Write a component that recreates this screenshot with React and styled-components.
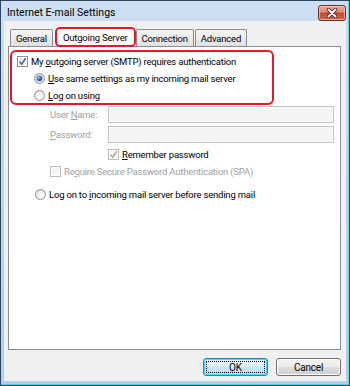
import styled, { createGlobalStyle } from "styled-components"

const GlobalStyle = createGlobalStyle`
  html, body {
    margin: 0;
    padding: 0;
    width: 350px;
    height: 386px;
    overflow: hidden;
    background: #fff;
  }
  * {
    box-sizing: border-box;
  }
`

const Window = styled.div`
  width: 350px;
  height: 386px;
  display: flex;
  flex-direction: column;
  border: 1px solid #2f4463;
  background: linear-gradient(180deg, #cddff2 0%, #bcd3ec 60%, #b4cde9 100%);
  box-shadow: inset -1px -1px 0 #55d3f0;
  padding: 0 3px 4px 3px;
  font-family: Roboto, "Liberation Sans", sans-serif;
  font-size: 9.5px;
  letter-spacing: -0.2px;
  color: #000;
`

const TitleBar = styled.div`
  height: 20px;
  display: flex;
  align-items: center;
  justify-content: space-between;
  padding-left: 3px;
  padding-top: 2px;
  font-size: 10.5px;
  letter-spacing: 0;
  color: #000;
`

const CloseButton = styled.div`
  width: 28px;
  height: 16px;
  margin-top: 2px;
  border: 1px solid #6b2e26;
  border-radius: 3px;
  background: linear-gradient(180deg, #e9a99a 0%, #de8a78 45%, #c94a33 50%, #d0614a 100%);
  box-shadow: inset 0 0 0 1px rgba(255, 220, 210, 0.6);
  display: flex;
  align-items: center;
  justify-content: center;
`

const Client = styled.div`
  flex: 1;
  display: flex;
  flex-direction: column;
  background: #f0f0f0;
  padding: 6px 5px 5px 4px;
`

const TabRow = styled.div`
  display: flex;
  align-items: flex-end;
  height: 20px;
  margin-bottom: -1px;
  padding-left: 2px;
  position: relative;
  z-index: 1;
`

const Tab = styled.div`
  height: ${({ $active }) => ($active ? "20px" : "17px")};
  padding: 0 ${({ $active }) => ($active ? "6px" : "5px")};
  display: flex;
  align-items: center;
  font-size: 9.5px;
  background: ${({ $active }) =>
    $active ? "#fff" : "linear-gradient(180deg, #f3f3f3 0%, #ebebeb 50%, #dfdfdf 100%)"};
  border: ${({ $active }) => ($active ? "2px solid #e3182b" : "1px solid #898c95")};
  border-bottom: ${({ $active }) => ($active ? "2px solid #e3182b" : "none")};
  border-radius: ${({ $active }) => ($active ? "5px" : "2px 2px 0 0")};
  margin-right: ${({ $active }) => ($active ? "0" : "1px")};
  margin-left: ${({ $active }) => ($active ? "1px" : "0")};
  ${({ $active }) => !$active && "margin-bottom: 1px;"}
`

const Panel = styled.div`
  flex: 1;
  background: #fff;
  border: 1px solid #898c95;
  padding: 3px 0 0 1px;
  display: flex;
  flex-direction: column;
`

const Highlight = styled.div`
  width: 264px;
  border: 2px solid #e3182b;
  border-radius: 6px;
  padding: 1px 0 0 5px;
  display: flex;
  flex-direction: column;
  gap: 1px;
`

const Row = styled.div`
  height: 16px;
  display: flex;
  align-items: center;
  gap: 3px;
  margin-left: ${({ $indent }) => $indent || 0}px;
  margin-top: ${({ $top }) => $top || 0}px;
  color: ${({ $disabled }) => ($disabled ? "#a0a0a0" : "#000")};
`

const Key = styled.span`
  text-decoration: underline;
  text-underline-offset: 1px;
`

const CredGrid = styled.div`
  display: grid;
  grid-template-columns: 58px 226px;
  grid-auto-rows: 17px;
  row-gap: 3px;
  margin: 1px 0 0 40px;
  color: #a0a0a0;
  align-items: center;
`

const Field = styled.div`
  height: 100%;
  border: 1px solid #c2c2c2;
  background: #f4f4f4;
  box-shadow: inset 0 0 0 1px #fafafa;
`

const CheckBox = styled.span`
  width: 11px;
  height: 11px;
  flex: none;
  border: 1px solid ${({ $disabled }) => ($disabled ? "#bcbcbc" : "#8e8f8f")};
  background: ${({ $disabled }) =>
    $disabled ? "#f4f4f4" : "linear-gradient(135deg, #dcdcdc 0%, #f6f6f6 80%, #fff 100%)"};
  box-shadow: inset 0 0 0 1px #fff;
  display: flex;
  align-items: center;
  justify-content: center;
`

const RadioCircle = styled.span`
  width: 11px;
  height: 11px;
  flex: none;
  border-radius: 50%;
  border: 1px solid #8e8f8f;
  background: radial-gradient(circle at 60% 65%, #fff 0%, #eaeaea 60%, #d0d0d0 100%);
  display: flex;
  align-items: center;
  justify-content: center;
`

const RadioDot = styled.span`
  width: 5px;
  height: 5px;
  border-radius: 50%;
  background: radial-gradient(circle at 35% 35%, #8bc6f0 0%, #1f5fa8 50%, #0d2c5c 100%);
  box-shadow: 0 0 0 1px rgba(40, 80, 140, 0.35);
`

const ButtonRow = styled.div`
  display: flex;
  justify-content: flex-end;
  gap: 8px;
  margin-top: 8px;
`

const Button = styled.div`
  width: 65px;
  height: 18px;
  border-radius: 3px;
  display: flex;
  align-items: center;
  justify-content: center;
  font-size: 10px;
  border: 1px solid ${({ $default }) => ($default ? "#3c7fb1" : "#707070")};
  background: ${({ $default }) =>
    $default
      ? "linear-gradient(180deg, #eaf6fd 0%, #dff2fc 50%, #c6e8fb 50%, #b8e0f7 100%)"
      : "linear-gradient(180deg, #f2f2f2 0%, #ebebeb 50%, #dddddd 50%, #cfcfcf 100%)"};
  box-shadow: inset 0 0 0 1px ${({ $default }) => ($default ? "#48d6f9" : "#fcfcfc")};
  ${({ $default }) => $default && "outline: 1px dotted #000; outline-offset: -4px;"}
`

const Check = ({ checked, disabled }) => (
  <CheckBox $disabled={disabled}>
    {checked && (
      <svg width="9" height="9" viewBox="0 0 9 9">
        <path
          d="M1.5 4.6 L3.6 7.2 L7.8 1.2"
          fill="none"
          stroke={disabled ? "#a8a8a8" : "#4a5f96"}
          strokeWidth="1.5"
        />
      </svg>
    )}
  </CheckBox>
)

const Radio = ({ checked }) => <RadioCircle>{checked && <RadioDot />}</RadioCircle>

const App = () => {
  return (
    <>
      <GlobalStyle />
      <Window>
        <TitleBar>
          <span>Internet E-mail Settings</span>
          <CloseButton>
            <svg width="14" height="10" viewBox="0 0 14 10">
              <path d="M0 5 H14" stroke="#d8301c" strokeWidth="1" />
              <path
                d="M3.5 1.5 L10.5 8.5 M10.5 1.5 L3.5 8.5"
                stroke="#3a1a14"
                strokeWidth="3.4"
                strokeLinecap="round"
              />
              <path
                d="M3.5 1.5 L10.5 8.5 M10.5 1.5 L3.5 8.5"
                stroke="#fff"
                strokeWidth="2"
                strokeLinecap="round"
              />
            </svg>
          </CloseButton>
        </TitleBar>
        <Client>
          <TabRow>
            <Tab>General</Tab>
            <Tab $active>Outgoing Server</Tab>
            <Tab>Connection</Tab>
            <Tab>Advanced</Tab>
          </TabRow>
          <Panel>
            <Highlight>
              <Row>
                <Check checked />
                <span>
                  My <Key>o</Key>utgoing server (SMTP) requires authentication
                </span>
              </Row>
              <Row $indent={17}>
                <Radio checked />
                <span>
                  <Key>U</Key>se same settings as my incoming mail server
                </span>
              </Row>
              <Row $indent={17}>
                <Radio />
                <span>
                  <Key>L</Key>og on using
                </span>
              </Row>
            </Highlight>
            <CredGrid>
              <span>
                User <Key>N</Key>ame:
              </span>
              <Field />
              <span>
                <Key>P</Key>assword:
              </span>
              <Field />
            </CredGrid>
            <Row $indent={98} $top={3} $disabled>
              <Check checked disabled />
              <span style={{ color: "#000" }}>
                <Key>R</Key>emember password
              </span>
            </Row>
            <Row $indent={40} $top={1} $disabled>
              <Check disabled />
              <span>
                Re<Key>q</Key>uire Secure Password Authentication (SPA)
              </span>
            </Row>
            <Row $indent={25} $top={7}>
              <Radio />
              <span>
                Log on to <Key>i</Key>ncoming mail server before sending mail
              </span>
            </Row>
          </Panel>
          <ButtonRow>
            <Button $default>OK</Button>
            <Button>Cancel</Button>
          </ButtonRow>
        </Client>
      </Window>
    </>
  )
}

export default App
